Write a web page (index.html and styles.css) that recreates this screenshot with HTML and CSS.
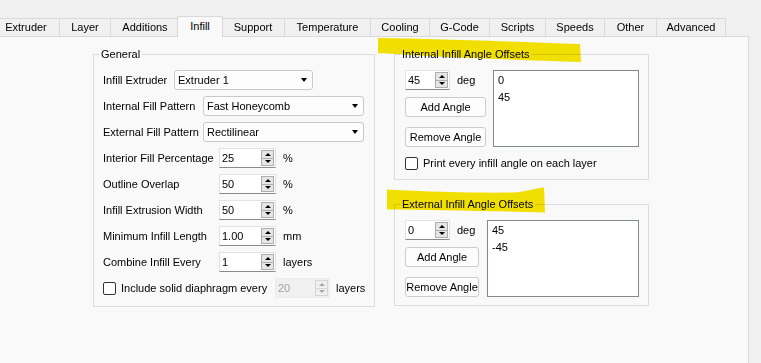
FILE: index.html
```html
<!DOCTYPE html>
<html lang="en">
<head>
    <meta charset="UTF-8">
    <title>Infill Settings</title>
    <link rel="stylesheet" href="styles.css">
</head>
<body>
    <div class="tabs">
        <div class="tab">Extruder</div>
        <div class="tab">Layer</div>
        <div class="tab">Additions</div>
        <div class="tab active">Infill</div>
        <div class="tab">Support</div>
        <div class="tab">Temperature</div>
        <div class="tab">Cooling</div>
        <div class="tab">G-Code</div>
        <div class="tab">Scripts</div>
        <div class="tab">Speeds</div>
        <div class="tab">Other</div>
        <div class="tab">Advanced</div>
    </div>

    <div class="pane">
        <fieldset class="group general">
            <legend>General</legend>
            <div class="group-body">
                <div class="row">
                    <span class="lbl lbl-short">Infill Extruder</span>
                    <div class="combo combo-short"><span>Extruder 1</span></div>
                </div>
                <div class="row">
                    <span class="lbl lbl-mid">Internal Fill Pattern</span>
                    <div class="combo"><span>Fast Honeycomb</span></div>
                </div>
                <div class="row">
                    <span class="lbl lbl-mid">External Fill Pattern</span>
                    <div class="combo"><span>Rectilinear</span></div>
                </div>
                <div class="row">
                    <span class="lbl">Interior Fill Percentage</span>
                    <div class="spin"><span class="spin-val">25</span><span class="spin-btns"><i class="up"></i><i class="down"></i></span></div>
                    <span class="unit">%</span>
                </div>
                <div class="row">
                    <span class="lbl">Outline Overlap</span>
                    <div class="spin"><span class="spin-val">50</span><span class="spin-btns"><i class="up"></i><i class="down"></i></span></div>
                    <span class="unit">%</span>
                </div>
                <div class="row">
                    <span class="lbl">Infill Extrusion Width</span>
                    <div class="spin"><span class="spin-val">50</span><span class="spin-btns"><i class="up"></i><i class="down"></i></span></div>
                    <span class="unit">%</span>
                </div>
                <div class="row">
                    <span class="lbl">Minimum Infill Length</span>
                    <div class="spin"><span class="spin-val">1.00</span><span class="spin-btns"><i class="up"></i><i class="down"></i></span></div>
                    <span class="unit">mm</span>
                </div>
                <div class="row">
                    <span class="lbl">Combine Infill Every</span>
                    <div class="spin"><span class="spin-val">1</span><span class="spin-btns"><i class="up"></i><i class="down"></i></span></div>
                    <span class="unit">layers</span>
                </div>
                <div class="row">
                    <span class="check"></span>
                    <span class="lbl lbl-check">Include solid diaphragm every</span>
                    <div class="spin spin-disabled"><span class="spin-val">20</span><span class="spin-btns"><i class="up"></i><i class="down"></i></span></div>
                    <span class="unit unit-near">layers</span>
                </div>
            </div>
        </fieldset>

        <div class="side">
            <fieldset class="group offsets">
                <legend>Internal Infill Angle Offsets</legend>
                <div class="group-body">
                    <div class="angles">
                        <div class="angle-ctrls">
                            <div class="deg-row">
                                <div class="spin spin-small"><span class="spin-val">45</span><span class="spin-btns"><i class="up"></i><i class="down"></i></span></div>
                                <span class="unit">deg</span>
                            </div>
                            <button class="btn" type="button">Add Angle</button>
                            <button class="btn btn-remove" type="button">Remove Angle</button>
                        </div>
                        <ul class="list">
                            <li>0</li>
                            <li>45</li>
                        </ul>
                    </div>
                    <div class="check-row">
                        <span class="check"></span>
                        <span>Print every infill angle on each layer</span>
                    </div>
                </div>
            </fieldset>

            <fieldset class="group offsets external">
                <legend>External Infill Angle Offsets</legend>
                <div class="group-body">
                    <div class="angles">
                        <div class="angle-ctrls">
                            <div class="deg-row">
                                <div class="spin spin-small"><span class="spin-val">0</span><span class="spin-btns"><i class="up"></i><i class="down"></i></span></div>
                                <span class="unit">deg</span>
                            </div>
                            <button class="btn" type="button">Add Angle</button>
                            <button class="btn btn-remove" type="button">Remove Angle</button>
                        </div>
                        <ul class="list">
                            <li>45</li>
                            <li>-45</li>
                        </ul>
                    </div>
                </div>
            </fieldset>
        </div>
    </div>

    <svg class="marker" width="761" height="363" viewBox="0 0 761 363">
        <path d="M378 38 C420 38.5 500 41 580 44 L581 62 C520 60 460 58 410 55 C395 54 385 53.5 378 53 Z"/>
        <path d="M387 189.5 C430 192 480 193 515 192.5 C528 191 536 188 544 187.5 L545 212.5 C490 211 430 210 387 209.5 Z"/>
    </svg>
</body>
</html>
```

FILE: styles.css
```css
body {
    margin: 0;
    background-color: #f0f0f0;
    font-family: "Liberation Sans", Arial, sans-serif;
    font-size: 11px;
    color: #000;
    overflow: hidden;
}

/* tab bar */
.tabs {
    display: grid;
    grid-template-columns: 67px 51px 69px 42px 63px 86px 59px 60px 56px 59px 52px 70px;
    align-items: end;
    width: 734px;
    margin: 16px 0 0 -8px;
}
.tab {
    box-sizing: border-box;
    height: 18px;
    line-height: 17px;
    border-top: 1px solid #d9d9d9;
    border-left: 1px solid #d9d9d9;
    text-align: center;
    white-space: nowrap;
}
.tab:last-child {
    border-right: 1px solid #d9d9d9;
}
.tab.active {
    position: relative;
    z-index: 1;
    height: 21px;
    margin: 0 -2px -1px;
    padding-bottom: 2px;
    line-height: 18px;
    border-right: 1px solid #d9d9d9;
    background-color: #f9f9f9;
}

.pane {
    box-sizing: border-box;
    width: 749px;
    height: 330px;
    display: flex;
    align-items: flex-start;
    padding: 10px 0 0 93px;
    border-top: 1px solid #d9d9d9;
    border-right: 1px solid #d9d9d9;
    background-color: #f9f9f9;
}

/* group boxes */
.group {
    box-sizing: border-box;
    margin: 0;
    padding: 0;
    min-width: 0;
    border: 1px solid #dcdcdc;
}
.group legend {
    margin-left: 5px;
    padding: 0 2px;
    line-height: 14px;
}
.general {
    width: 282px;
}
.general .group-body {
    padding: 9px 8px 8px 9px;
}
.side {
    display: flex;
    flex-direction: column;
    margin-left: 19px;
}
.offsets {
    width: 255px;
}
.offsets .group-body {
    padding: 9px 9px 8px 10px;
}
.external {
    margin-top: 17px;
}

/* form rows */
.row {
    display: flex;
    align-items: center;
    height: 20px;
}
.row + .row {
    margin-top: 6px;
}
.lbl {
    flex: none;
    width: 116px;
    white-space: nowrap;
}
.lbl-short {
    width: 71px;
}
.lbl-mid {
    width: 100px;
}
.lbl-check {
    width: 154px;
}
.unit {
    margin-left: 7px;
}
.unit-near {
    margin-left: 6px;
}

.combo {
    box-sizing: border-box;
    display: flex;
    align-items: center;
    width: 161px;
    height: 20px;
    padding: 0 5px 0 3px;
    border: 1px solid #c9c9c9;
    border-radius: 3px;
    background-color: #fdfdfd;
}
.combo-short {
    width: 139px;
}
.combo span {
    flex: 1;
}
.combo::after {
    content: "";
    border-left: 3.5px solid transparent;
    border-right: 3.5px solid transparent;
    border-top: 4px solid #000;
}

.spin {
    box-sizing: border-box;
    display: flex;
    width: 57px;
    height: 20px;
    border: 1px solid #e3e3e3;
    border-bottom-color: #8a8a8a;
    background-color: #fff;
}
.spin-small {
    width: 45px;
}
.spin-val {
    flex: 1;
    padding-left: 2px;
    line-height: 18px;
}
.spin-btns {
    box-sizing: border-box;
    display: flex;
    flex-direction: column;
    width: 13px;
    margin: 1px 1px 1px 0;
    border: 1px solid #adadad;
    background-color: #e6e6e6;
}
.spin-btns i {
    flex: 1;
    display: flex;
    align-items: center;
    justify-content: center;
}
.spin-btns i.up {
    border-bottom: 1px solid #adadad;
}
.spin-btns i::after {
    content: "";
    border-left: 3px solid transparent;
    border-right: 3px solid transparent;
}
.spin-btns i.up::after {
    border-bottom: 3px solid #000;
}
.spin-btns i.down::after {
    border-top: 3px solid #000;
}
.spin-disabled {
    width: 55px;
    border-color: #ebebeb;
    background-color: #f0f0f0;
    color: #a0a0a0;
}
.spin-disabled .spin-btns {
    border-color: #d5d5d5;
    background-color: #f0f0f0;
}
.spin-disabled .spin-btns i.up {
    border-bottom-color: #d5d5d5;
}
.spin-disabled .spin-btns i.up::after {
    border-bottom-color: #a8a8a8;
}
.spin-disabled .spin-btns i.down::after {
    border-top-color: #a8a8a8;
}

.check {
    box-sizing: border-box;
    flex: none;
    width: 13px;
    height: 13px;
    margin-right: 5px;
    border: 1px solid #333;
    border-radius: 2px;
    background-color: #fff;
}

/* angle offset groups */
.angles {
    display: flex;
    gap: 7px;
}
.angle-ctrls {
    display: flex;
    flex-direction: column;
    width: 81px;
}
.external .angles {
    gap: 8px;
}
.external .angle-ctrls {
    width: 74px;
}
.deg-row {
    display: flex;
    align-items: center;
}
.btn {
    height: 20px;
    margin-top: 7px;
    padding: 0;
    border: 1px solid #cccccc;
    border-radius: 3px;
    background-color: #fdfdfd;
    color: #000;
    font: inherit;
    white-space: nowrap;
}
.btn-remove {
    margin-top: 10px;
}
.list {
    box-sizing: border-box;
    flex: 1;
    height: 77px;
    margin: 0;
    padding: 1px 4px;
    list-style: none;
    border: 1px solid #828790;
    background-color: #fff;
}
.list li {
    line-height: 17px;
}
.check-row {
    display: flex;
    align-items: center;
    height: 16px;
    margin-top: 8px;
}

/* highlighter strokes over the screenshot */
.marker {
    position: absolute;
    top: 0;
    left: 0;
    pointer-events: none;
    mix-blend-mode: multiply;
}
.marker path {
    fill: #f6e500;
}
```
